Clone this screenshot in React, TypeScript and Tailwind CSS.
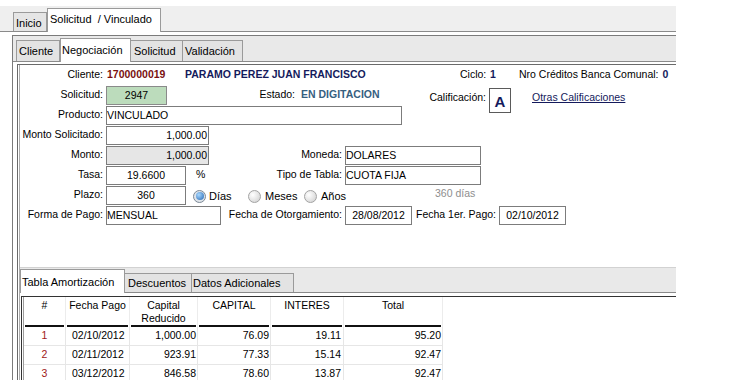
import type { ReactNode } from 'react'

const rows = [
  { n: '1', fecha: '02/10/2012', cap: '1,000.00', capital: '76.09', interes: '19.11', total: '95.20' },
  { n: '2', fecha: '02/11/2012', cap: '923.91', capital: '77.33', interes: '15.14', total: '92.47' },
  { n: '3', fecha: '03/12/2012', cap: '846.58', capital: '78.60', interes: '13.87', total: '92.47' },
]

function Label({ children, className = '' }: { children: ReactNode; className?: string }) {
  return <div className={'shrink-0 text-right whitespace-nowrap ' + className}>{children}</div>
}

function Field({ children, className = '' }: { children: ReactNode; className?: string }) {
  return (
    <div className={'shrink-0 h-[19px] border border-[#7c7c7c] leading-[17px] whitespace-nowrap overflow-hidden ' + className}>
      {children}
    </div>
  )
}

function Radio({ checked }: { checked?: boolean }) {
  if (checked) {
    return (
      <span className="w-[13px] h-[13px] rounded-full border border-[#7b8896] bg-[#dfe4ea] flex items-center justify-center shrink-0">
        <span className="w-[8px] h-[8px] rounded-full bg-[radial-gradient(circle_at_35%_35%,#a8d8ff,#2466b3)]" />
      </span>
    )
  }
  return (
    <span className="w-[13px] h-[13px] rounded-full border border-[#a3a3a3] bg-[radial-gradient(circle_at_35%_35%,#ffffff,#cdcdcd)] shrink-0" />
  )
}

function Row({ children }: { children: ReactNode }) {
  return <div className="flex items-center h-[20px]">{children}</div>
}

export default function App() {
  return (
    <div className="w-[747px] h-[390px] bg-white overflow-hidden text-[10.5px] text-black font-['Liberation_Sans',Arial,sans-serif]">
      <div className="w-[676px] h-[380px] overflow-hidden pt-[6px]">
        {/* pestañas superiores */}
        <div className="h-[26px] bg-[#efefef] border-b border-[#8a8a8a] flex items-end pl-[13px] text-[11px]">
          <div className="h-[19px] w-[34px] border border-b-0 border-[#9a9a9a] bg-[#e5e5e5] flex items-center pl-[2px] pt-[3px]">Inicio</div>
          <div className="h-[24px] w-[114px] -mb-px relative border border-b-0 border-[#9a9a9a] bg-white pl-[2px] pt-[2px] whitespace-pre">Solicitud  / Vinculado</div>
        </div>
        <div className="h-[3px]" />

        <div className="ml-[12px] border-t border-l border-[#7b7b7b]">
          {/* pestañas internas */}
          <div className="h-[26px] bg-[#e9e9e9] border-b border-[#8a8a8a] flex items-end pl-[3px] text-[11px]">
            <div className="h-[21px] w-[44px] border border-b-0 border-[#9a9a9a] bg-[#e3e3e3] flex items-center pl-[2px] pt-[1px]">Cliente</div>
            <div className="h-[24px] w-[71px] -mb-px relative border border-b-0 border-[#9a9a9a] bg-white pl-[1px] pt-[3px]">Negociación</div>
            <div className="h-[21px] w-[52px] border border-b-0 border-l-0 border-[#9a9a9a] bg-[#e3e3e3] flex items-center pl-[3px] pt-[1px]">Solicitud</div>
            <div className="h-[21px] w-[60px] border border-b-0 border-l-0 border-[#9a9a9a] bg-[#e3e3e3] flex items-center pl-[2px] pt-[1px]">Validación</div>
          </div>
          <div className="h-[2px]" />

          <div className="pl-[4px]">
            <div className="border-t border-l border-[#6a6a6a] pl-px">
              <div className="border-l border-[#ababab]">
                <div>
                  <Row>
                    <Label className="w-[83px]">Cliente:</Label>
                    <div className="ml-[4px] w-[78px] shrink-0 font-bold text-[#7a1010]">1700000019</div>
                    <div className="w-[275px] shrink-0 font-bold text-[#141a5c] whitespace-nowrap">PARAMO PEREZ JUAN FRANCISCO</div>
                    <div className="w-[30px] shrink-0">Ciclo:</div>
                    <div className="w-[29px] shrink-0 font-bold text-[#141a5c]">1</div>
                    <div className="shrink-0 whitespace-nowrap">Nro Créditos Banca Comunal:</div>
                    <div className="ml-[4px] font-bold text-[#141a5c]">0</div>
                  </Row>
                  <Row>
                    <Label className="w-[83px]">Solicitud:</Label>
                    <Field className="ml-[3px] w-[61px] bg-[#bcdcbc] border-[#8a8a8a] text-center">2947</Field>
                    <Label className="w-[128px]">Estado:</Label>
                    <div className="ml-[6px] w-[127px] shrink-0 font-bold text-[#36607f] whitespace-nowrap">EN DIGITACION</div>
                    <Label className="w-[58px] pt-[5px]">Calificación:</Label>
                    <div className="ml-[3px] mt-[10px] w-[22px] h-[25px] shrink-0 border border-[#5a5a5a] bg-white flex items-start justify-center pt-[2px] text-[15px] font-bold text-[#141a5c] relative z-10">A</div>
                    <div className="ml-[21px] pt-[5px] text-[#141a5c] underline whitespace-nowrap">Otras Calificaciones</div>
                  </Row>
                  <Row>
                    <Label className="w-[83px]">Producto:</Label>
                    <Field className="ml-[3px] w-[296px]">VINCULADO</Field>
                  </Row>
                  <Row>
                    <Label className="w-[83px]">Monto Solicitado:</Label>
                    <Field className="ml-[3px] w-[103px] text-right pr-[1px]">1,000.00</Field>
                  </Row>
                  <Row>
                    <Label className="w-[83px]">Monto:</Label>
                    <Field className="ml-[3px] w-[103px] text-right pr-[1px] bg-[#e6e6e6]">1,000.00</Field>
                    <Label className="w-[133px]">Moneda:</Label>
                    <Field className="ml-[3px] w-[136px]">DOLARES</Field>
                  </Row>
                  <Row>
                    <Label className="w-[83px]">Tasa:</Label>
                    <Field className="ml-[3px] w-[80px] text-center">19.6600</Field>
                    <div className="w-[23px] shrink-0 pl-[10px]">%</div>
                    <Label className="w-[133px]">Tipo de Tabla:</Label>
                    <Field className="ml-[3px] w-[136px]">CUOTA FIJA</Field>
                  </Row>
                  <Row>
                    <Label className="w-[83px]">Plazo:</Label>
                    <Field className="ml-[3px] w-[80px] text-center">360</Field>
                    <div className="ml-[7px] w-[55px] shrink-0 flex items-center gap-[3px] pt-[2px]">
                      <Radio checked />
                      <span className="text-[11px]">Días</span>
                    </div>
                    <div className="w-[56px] shrink-0 flex items-center gap-[4px] pt-[2px]">
                      <Radio />
                      <span className="text-[11px]">Meses</span>
                    </div>
                    <div className="w-[56px] shrink-0 flex items-center gap-[4px] pt-[2px]">
                      <Radio />
                      <span className="text-[11px]">Años</span>
                    </div>
                    <div className="ml-[75px] -mt-[3px] text-[#8e8e8e] whitespace-nowrap">360 días</div>
                  </Row>
                  <Row>
                    <Label className="w-[83px]">Forma de Pago:</Label>
                    <Field className="ml-[3px] w-[115px]">MENSUAL</Field>
                    <Label className="w-[121px]">Fecha de Otorgamiento:</Label>
                    <Field className="ml-[3px] w-[67px] text-center">28/08/2012</Field>
                    <Label className="w-[84px]">Fecha 1er. Pago:</Label>
                    <Field className="ml-[3px] w-[67px] text-center">02/10/2012</Field>
                  </Row>
                </div>

                <div className="h-[42px]" />

                {/* pestañas inferiores */}
                <div className="h-[26px] bg-[#e9e9e9] border-t border-t-[#d2d2d2] border-b border-b-[#8a8a8a] flex items-end text-[11px]">
                  <div className="h-[24px] w-[105px] -mb-px relative border border-b-0 border-[#9a9a9a] bg-white pl-[1px] pt-[4px] whitespace-nowrap">Tabla Amortización</div>
                  <div className="h-[19px] w-[67px] border border-b-0 border-l-0 border-[#9a9a9a] bg-[#e3e3e3] flex items-center pl-[3px] pt-[1px]">Descuentos</div>
                  <div className="h-[19px] w-[102px] border border-b-0 border-l-0 border-[#9a9a9a] bg-[#e3e3e3] flex items-center pl-[1px] pt-[1px] whitespace-nowrap">Datos Adicionales</div>
                </div>
                <div className="h-[3px]" />

                <div className="ml-px border-t border-l border-[#333333] pl-px">
                  <div className="border-l border-[#9d9d9d] pb-[20px]">
                    <div className="flex h-[30px]">
                      {[
                        ['w-[42px]', '#'],
                        ['w-[64px]', 'Fecha Pago'],
                        ['w-[68px]', 'Capital Reducido'],
                        ['w-[73px]', 'CAPITAL'],
                        ['w-[73px]', 'INTERES'],
                        ['w-[99px]', 'Total'],
                      ].map(([w, t]) => (
                        <div key={t} className={w + ' shrink-0 border-r border-[#ececec] px-px'}>
                          <div className="h-full border-b-2 border-[#111111] text-center pt-[2px] leading-[13px]">
                            {t === 'Capital Reducido' ? (
                              <>
                                Capital
                                <br />
                                Reducido
                              </>
                            ) : (
                              t
                            )}
                          </div>
                        </div>
                      ))}
                    </div>
                    {rows.map((r) => (
                      <div key={r.n} className="flex h-[19px] leading-[17px]">
                        <div className="w-[42px] shrink-0 border-r border-b border-[#e6e6e6] text-center text-[#a01818]">{r.n}</div>
                        <div className="w-[64px] shrink-0 border-r border-b border-[#e6e6e6] pl-[6px]">{r.fecha}</div>
                        <div className="w-[68px] shrink-0 border-r border-b border-[#e6e6e6] text-right pr-[1px]">{r.cap}</div>
                        <div className="w-[73px] shrink-0 border-r border-b border-[#e6e6e6] text-right pr-[1px]">{r.capital}</div>
                        <div className="w-[73px] shrink-0 border-r border-b border-[#e6e6e6] text-right pr-[2px]">{r.interes}</div>
                        <div className="w-[99px] shrink-0 border-r border-b border-[#e6e6e6] text-right pr-[1px]">{r.total}</div>
                      </div>
                    ))}
                  </div>
                </div>
              </div>
            </div>
          </div>
        </div>
      </div>
    </div>
  )
}
